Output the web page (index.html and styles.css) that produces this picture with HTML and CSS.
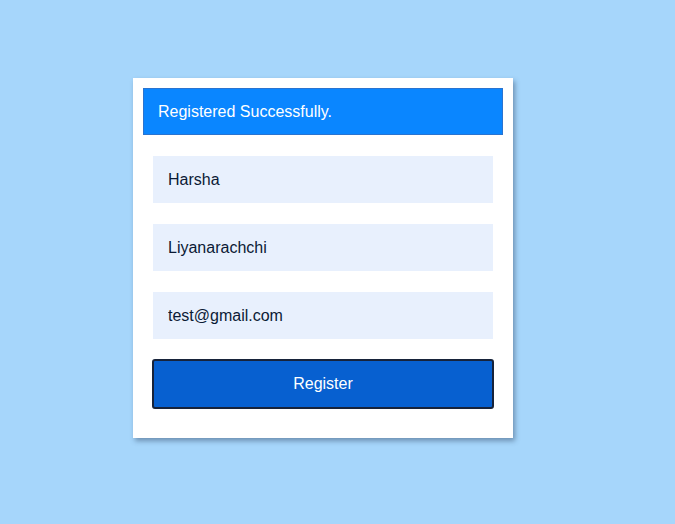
FILE: index.html
```html
<!DOCTYPE html>
<html>
<head>
<meta charset="utf-8">
<link rel="stylesheet" href="styles.css">
</head>
<body>
<div class="card">
  <div class="banner">Registered Successfully.</div>
  <form class="form">
    <input class="field" type="text" value="Harsha">
    <input class="field" type="text" value="Liyanarachchi">
    <input class="field" type="text" value="test@gmail.com">
    <button class="btn" type="button">Register</button>
  </form>
</div>
</body>
</html>
```
FILE: styles.css
```css
html, body {
  margin: 0;
  padding: 0;
}
body {
  background: #a6d6fb;
  font-family: "Liberation Sans", Arial, sans-serif;
  padding-top: 78px;
  height: 446px;
}
.card {
  box-sizing: border-box;
  width: 380px;
  margin-left: 133px;
  background: #fff;
  padding: 10px 10px 29px;
  box-shadow: 2px 3px 5px rgba(40, 60, 90, 0.45);
}
.banner {
  box-sizing: border-box;
  height: 47px;
  background: #0a86ff;
  border: 1px solid #2a74d0;
  color: #fff;
  font-size: 16px;
  line-height: 45px;
  padding-left: 14px;
}
.form {
  display: flex;
  flex-direction: column;
  padding: 0 10px;
  margin: 0;
}
.field {
  box-sizing: border-box;
  height: 47px;
  margin-top: 21px;
  border: none;
  outline: none;
  background: #e8f0fd;
  color: #0b1a35;
  font-family: "Liberation Sans", Arial, sans-serif;
  font-size: 16px;
  padding: 0 15px;
}
.btn {
  box-sizing: border-box;
  height: 50px;
  margin: 20px -1px 0;
  background: #0760d0;
  border: 2px solid #17233a;
  border-radius: 3px;
  color: #fff;
  font-family: "Liberation Sans", Arial, sans-serif;
  font-size: 16px;
}
```
